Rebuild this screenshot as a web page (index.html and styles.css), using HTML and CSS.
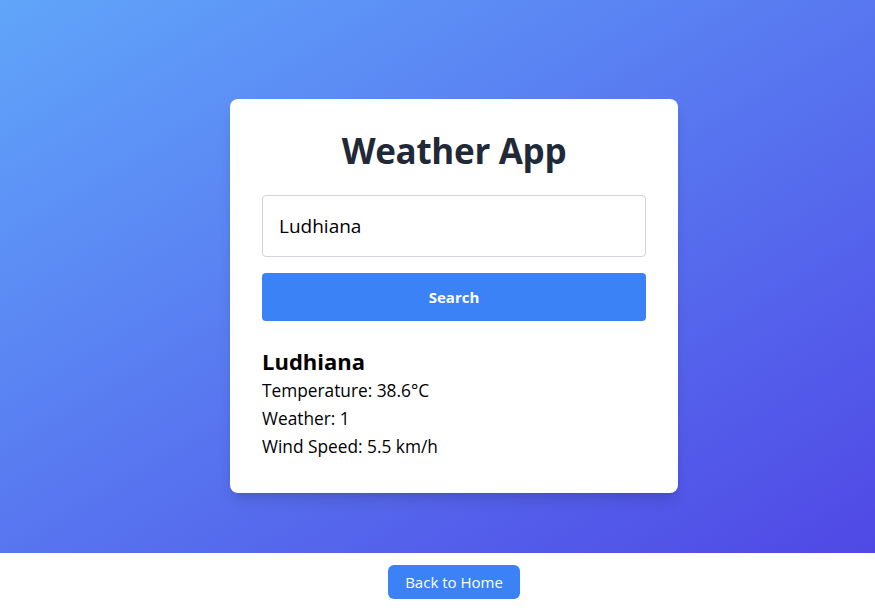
FILE: index.html
```html
<!DOCTYPE html>
<html lang="en">
<head>
<meta charset="utf-8">
<title>Weather App</title>
<link rel="stylesheet" href="styles.css">
</head>
<body>
<main class="hero">
  <div class="card">
    <h1 class="title">Weather App</h1>
    <input class="city-input" type="text" value="Ludhiana">
    <button class="search-btn">Search</button>
    <section class="result">
      <h2 class="city">Ludhiana</h2>
      <p class="line">Temperature: 38.6°C</p>
      <p class="line">Weather: 1</p>
      <p class="line">Wind Speed: 5.5 km/h</p>
    </section>
  </div>
</main>
<footer class="footer">
  <a class="home-btn" href="#">Back to Home</a>
</footer>
</body>
</html>
```

FILE: styles.css
```css
* { box-sizing: border-box; }
html { margin: 0; padding: 0; overflow: hidden; width: 875px; height: 610px; }
body {
  margin: 0;
  padding: 0;
  font-family: "Open Sans", "Noto Sans", "DejaVu Sans", sans-serif;
  background: #ffffff;
  width: 908px;
  height: 610px;
}
.hero {
  height: 553px;
  background: linear-gradient(to bottom right, #60a5fa, #4f46e5);
  display: flex;
  justify-content: center;
  align-items: flex-start;
  padding-top: 99px;
}
.card {
  width: 448px;
  background: #ffffff;
  border-radius: 8px;
  padding: 32px;
  box-shadow: 0 10px 15px -3px rgba(0,0,0,0.12), 0 4px 6px -4px rgba(0,0,0,0.1);
  display: flex;
  flex-direction: column;
}
.title {
  margin: 0 0 24px;
  font-size: 35px;
  line-height: 40px;
  font-weight: 700;
  color: #1f2937;
  text-align: center;
  letter-spacing: -0.3px;
}
.city-input {
  display: block;
  width: 100%;
  height: 62px;
  padding: 0 16px;
  border: 1px solid #d1d5db;
  border-radius: 4px;
  font-family: inherit;
  font-size: 19px;
  color: #000;
  margin: 0 0 16px;
  outline: none;
}
.search-btn {
  display: block;
  width: 100%;
  height: 48px;
  border: 0;
  border-radius: 4px;
  background: #3b82f6;
  color: #ffffff;
  font-family: inherit;
  font-size: 15px;
  font-weight: 700;
  cursor: pointer;
}
.result { margin-top: 24px; }
.city {
  margin: 0;
  font-size: 22px;
  line-height: 32px;
  font-weight: 700;
  color: #000;
}
.line {
  margin: 0;
  font-size: 17.3px;
  line-height: 28px;
  color: #000;
}
.footer {
  display: flex;
  justify-content: center;
  padding-top: 12px;
}
.home-btn {
  display: inline-flex;
  align-items: center;
  height: 34px;
  padding: 0 17px;
  border-radius: 6px;
  background: #3b82f6;
  color: #ffffff;
  font-size: 15px;
  text-decoration: none;
}
```
